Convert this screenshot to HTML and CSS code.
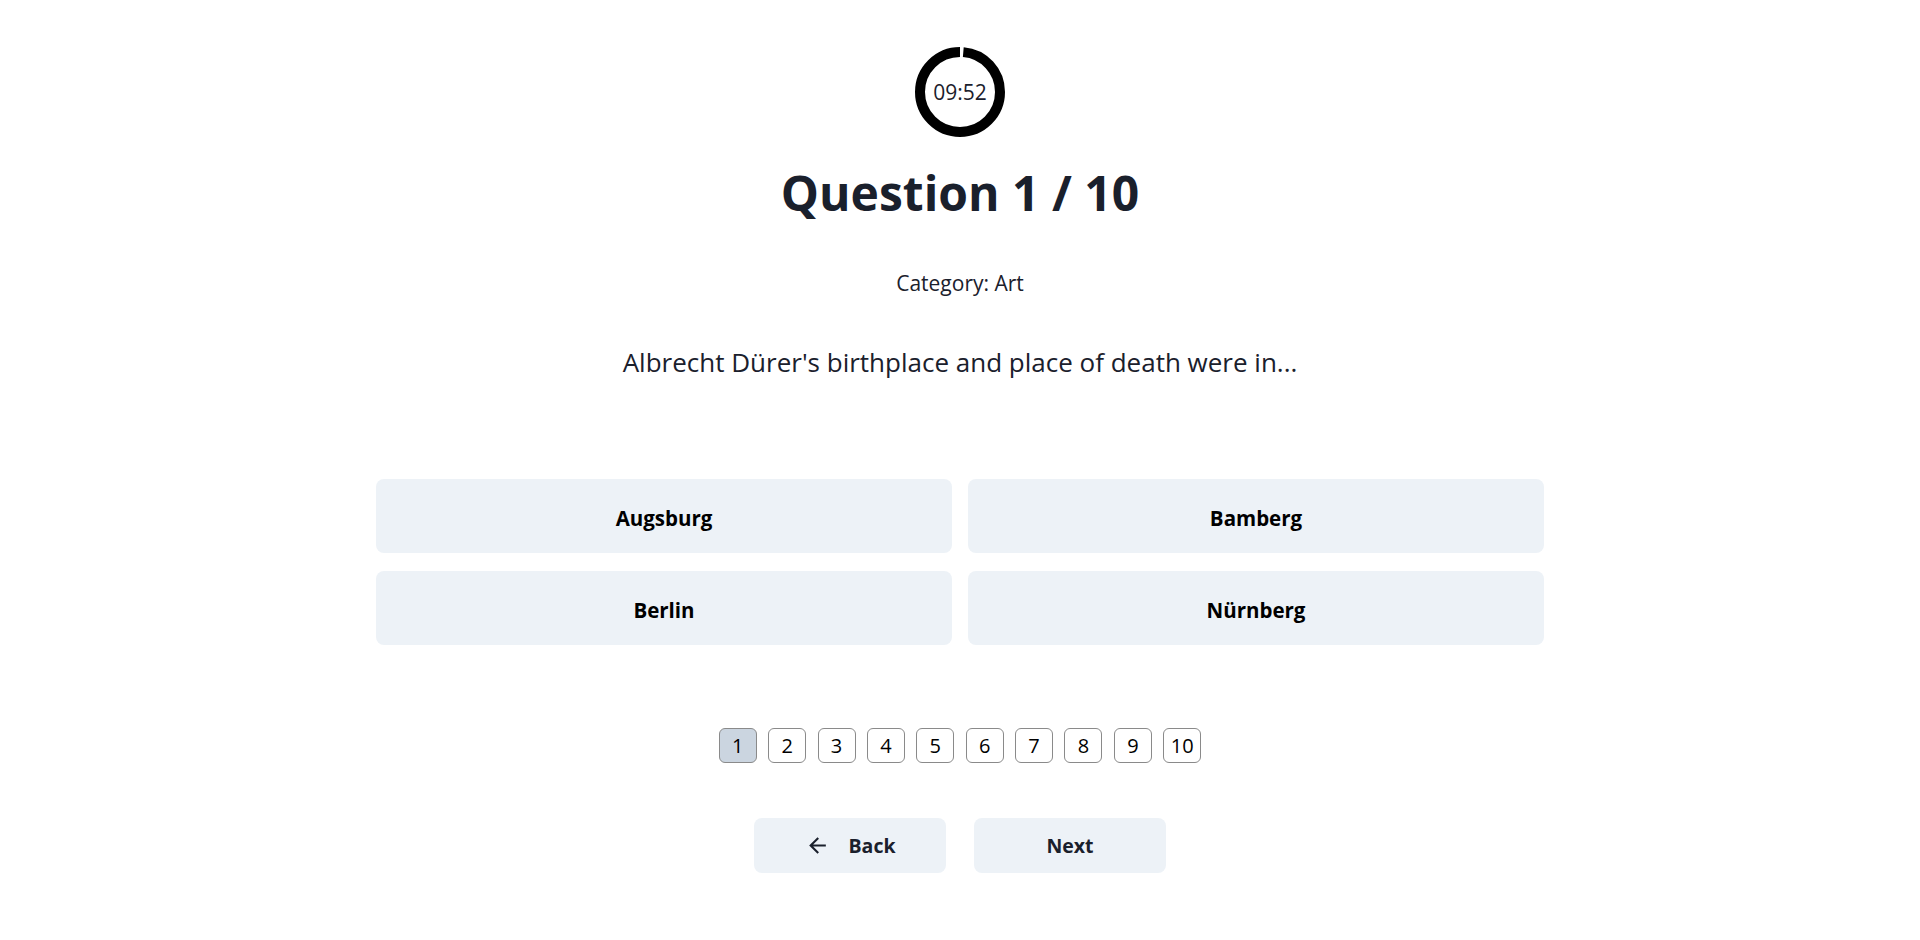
FILE: index.html
```html
<!DOCTYPE html>
<html lang="en">
<head>
<meta charset="utf-8">
<title>Quiz</title>
<link rel="stylesheet" href="styles.css">
</head>
<body>
<main class="page">
  <div class="timer">
    <svg class="timer-ring" width="90" height="90" viewBox="0 0 90 90">
      <circle cx="45" cy="45" r="40" fill="none" stroke="#000" stroke-width="10" stroke-dasharray="247.98 251.33" stroke-dashoffset="-3.35" transform="rotate(-90 45 45)"/>
    </svg>
    <span class="timer-text">09:52</span>
  </div>
  <h1 class="title">Question 1 / 10</h1>
  <p class="category">Category: Art</p>
  <p class="question">Albrecht Dürer's birthplace and place of death were in...</p>
  <div class="options">
    <button class="option">Augsburg</button>
    <button class="option">Bamberg</button>
    <button class="option">Berlin</button>
    <button class="option">Nürnberg</button>
  </div>
  <nav class="pager">
    <button class="page-btn active">1</button>
    <button class="page-btn">2</button>
    <button class="page-btn">3</button>
    <button class="page-btn">4</button>
    <button class="page-btn">5</button>
    <button class="page-btn">6</button>
    <button class="page-btn">7</button>
    <button class="page-btn">8</button>
    <button class="page-btn">9</button>
    <button class="page-btn">10</button>
  </nav>
  <div class="nav">
    <button class="nav-btn">
      <svg class="arrow" width="25" height="25" viewBox="0 0 24 24"><path fill="#1a202c" d="M20 11H7.83l5.59-5.59L12 4l-8 8 8 8 1.41-1.41L7.83 13H20v-2z"/></svg>
      <span>Back</span>
    </button>
    <button class="nav-btn">Next</button>
  </div>
</main>
</body>
</html>
```
FILE: styles.css
```css
* { box-sizing: border-box; }
html, body { margin: 0; padding: 0; background: #fff; }
body {
  font-family: "Open Sans", "Noto Sans", sans-serif;
  color: #1a202c;
}
.page {
  display: flex;
  flex-direction: column;
  align-items: center;
  padding-top: 47px;
}
.timer {
  display: grid;
  width: 90px;
  height: 90px;
  place-items: center;
}
.timer-ring, .timer-text { grid-area: 1 / 1; }
.timer-ring { display: block; }
.timer-text {
  font-size: 21px;
  color: #1a202c;
  line-height: 1;
}
.title {
  margin: 27px 0 0;
  font-size: 48px;
  line-height: 58px;
  font-weight: 700;
  color: #1a202c;
}
.category {
  margin: 47px 0 0;
  font-size: 21px;
  line-height: 28px;
}
.question {
  margin: 49px 0 0;
  font-size: 26px;
  line-height: 32px;
}
.options {
  margin-top: 101px;
  width: 1168px;
  display: grid;
  grid-template-columns: 1fr 1fr;
  column-gap: 16px;
  row-gap: 18px;
}
.option {
  height: 74px;
  padding: 3px 0 0;
  border: none;
  border-radius: 8px;
  background: #edf2f7;
  font-family: inherit;
  font-size: 20.5px;
  font-weight: 700;
  color: #000;
}
.pager {
  margin-top: 83px;
  display: flex;
  gap: 11.4px;
}
.page-btn {
  width: 38px;
  height: 35px;
  padding: 0;
  border: 1px solid #8a8a8a;
  border-radius: 6px;
  background: #fff;
  font-family: inherit;
  font-size: 20px;
  color: #000;
}
.page-btn.active { background: #cbd5e0; }
.nav {
  margin-top: 55px;
  display: flex;
  gap: 28px;
}
.nav-btn {
  width: 192px;
  height: 55px;
  border: none;
  border-radius: 8px;
  background: #edf2f7;
  display: flex;
  align-items: center;
  justify-content: center;
  gap: 19px;
  font-family: inherit;
  font-size: 19.5px;
  font-weight: 700;
  color: #1a202c;
}
.arrow { display: block; }
```
